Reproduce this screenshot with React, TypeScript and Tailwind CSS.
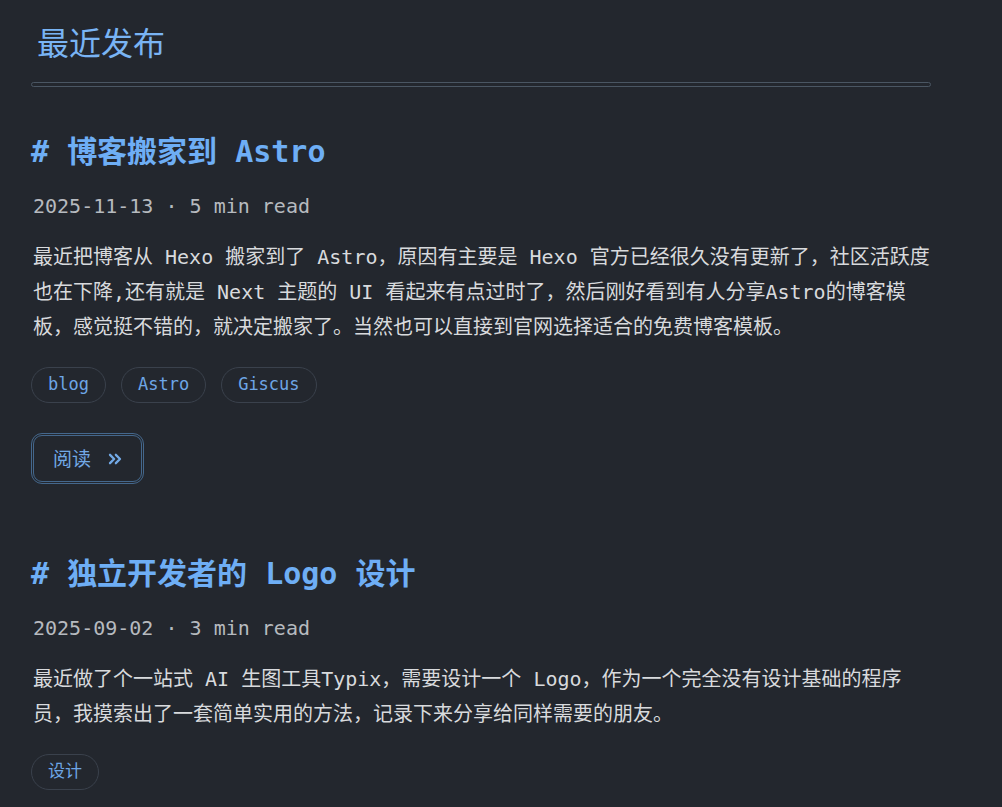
import { ChevronsRight } from "lucide-react"

const mono = "font-['DejaVu_Sans_Mono','Noto_Sans_CJK_SC',monospace]"

interface Post {
  title: string
  date: string
  minutes: number
  excerpt: string
  tags: string[]
}

const posts: Post[] = [
  {
    title: "博客搬家到 Astro",
    date: "2025-11-13",
    minutes: 5,
    excerpt:
      "最近把博客从 Hexo 搬家到了 Astro，原因有主要是 Hexo 官方已经很久没有更新了，社区活跃度也在下降,还有就是 Next 主题的 UI 看起来有点过时了，然后刚好看到有人分享Astro的博客模板，感觉挺不错的，就决定搬家了。当然也可以直接到官网选择适合的免费博客模板。",
    tags: ["blog", "Astro", "Giscus"],
  },
  {
    title: "独立开发者的 Logo 设计",
    date: "2025-09-02",
    minutes: 3,
    excerpt:
      "最近做了个一站式 AI 生图工具Typix，需要设计一个 Logo，作为一个完全没有设计基础的程序员，我摸索出了一套简单实用的方法，记录下来分享给同样需要的朋友。",
    tags: ["设计"],
  },
]

function PostCard({ post }: { post: Post }) {
  return (
    <article className="mt-[45px] mb-[70px]">
      <h3 className={`${mono} text-[30px] leading-[40px] font-bold text-[#6eaef5]`}>
        # {post.title}
      </h3>
      <p className={`${mono} mt-[20px] text-[20px] leading-[28px] text-[#b6babf] pl-[2px]`}>
        {post.date} · {post.minutes} min read
      </p>
      <p className={`${mono} mt-[20px] text-[20px] leading-[35px] text-[#d8dadd] pl-[2px]`}>
        {post.excerpt}
      </p>

      {/* Tags */}
      <div className="mt-[22px] flex gap-[15px]">
        {post.tags.map(t => (
          <span key={t}
            className={`${mono} h-[36px] px-[16px] flex items-center rounded-full border border-[#3a414c] text-[17px] text-[#6ea6e6]`}>
            {t}
          </span>
        ))}
      </div>

      <button
        className="mt-[30px] h-[51px] w-[113px] flex items-center gap-[14px] pl-[19px] rounded-[11px] border-[3px] border-double border-[#44678c] text-[#72a9e6] font-['Noto_Sans_CJK_SC',sans-serif] text-[19px]">
        阅读
        <ChevronsRight size={20} strokeWidth={2.75} />
      </button>
    </article>
  )
}

export default function App() {
  return (
    <div className="min-h-screen bg-[#23272e] pl-[31px] pt-[22px]">
      <div className="w-[900px]">
        <h2 className="pl-[6px] text-[32px] leading-[44px] text-[#79b4f4] font-['Liberation_Serif','Noto_Sans_CJK_SC',serif]">
          最近发布
        </h2>
        <div className="mt-[16px] h-[5px] rounded-full border border-[#4a5663]" />

        {posts.map(p => (
          <PostCard key={p.date} post={p} />
        ))}
      </div>
    </div>
  )
}
